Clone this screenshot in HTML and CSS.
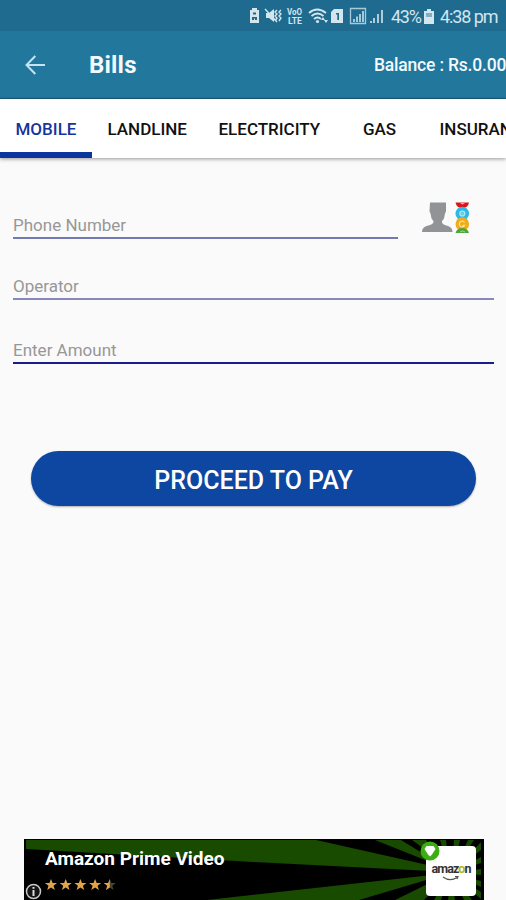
FILE: index.html
```html
<!DOCTYPE html>
<html lang="en">

<head>
    <meta charset="UTF-8">
    <meta name="viewport" content="width=device-width, initial-scale=1.0">
    <title>Bills</title>
    <link rel="stylesheet" href="styles.css">
</head>

<body>
    <!-- Status bar -->
    <div class="status-bar">
        <svg class="status-icons" width="140" height="20" viewBox="0 0 140 20" fill="#d3e5ed">
            <!-- battery saver -->
            <path fill-rule="evenodd" d="M3 2h5v2h2v13H1V4h2zM4 6.500v2h3v-2zM3 11v3h2v-1.500h1V14h2v-3z"/>
            <!-- muted -->
            <path d="M17 7h3l5-4v13l-5-4h-3z"/>
            <path d="M16 3l12 13M28 4l-2 2 2 2-2 2 2 2-2 3M32 4l-2 2 2 2-2 2 2 2-2 3" fill="none" stroke="#d3e5ed" stroke-width="1.400"/>
            <text class="volte" x="38" y="8.500" textLength="15" lengthAdjust="spacingAndGlyphs">VoO</text>
            <text class="volte" x="39" y="17.500" textLength="14" lengthAdjust="spacingAndGlyphs">LTE</text>
            <!-- wifi -->
            <path d="M60 7q8-7 17 0M62.500 10q6-5 12 0M65 13q3.500-3 7 0" fill="none" stroke="#d3e5ed" stroke-width="1.800"/>
            <circle cx="68.500" cy="15.500" r="1.600"/>
            <path d="M72 14l2-3 2 3zM75 14h4l-2 3z"/>
            <!-- sim -->
            <path fill-rule="evenodd" d="M85 3h9v14H82V6zM87 7v1.500h1.300V14H90V7z"/>
            <!-- signal -->
            <path d="M101.500 2.500h15v15h-15z" fill="none" stroke="#a7cadb" stroke-width="1.300"/>
            <path d="M104 13h2v3h-2zM107 10.500h2V16h-2zM110 8h2v8h-2zM113 5h2v11h-2z" opacity=".75"/>
            <path d="M121 15h2v2h-2zM124 12h2v5h-2zM128 8h2v9h-2zM132 4h2v13h-2z" opacity=".8"/>
        </svg>
        <span class="percent">43%</span>
        <svg class="battery" width="10" height="15" viewBox="0 0 10 15">
            <path d="M3 0h4v2h3v13H0V2h3z" fill="#d3e5ed"/>
            <path d="M2 4h6v4H2z" fill="#80adc2"/>
        </svg>
        <span class="time">4:38 pm</span>
    </div>

    <!-- Toolbar -->
    <header class="toolbar">
        <svg class="back" width="20" height="20" viewBox="0 0 20 20">
            <path d="M10.300 1L1.500 10l8.800 9M1.500 10H20" fill="none" stroke="#c3e4f0" stroke-width="2"/>
        </svg>
        <h1 class="title">Bills</h1>
        <span class="balance">Balance : Rs.0.00</span>
    </header>

    <nav class="tabs">
        <a class="tab active">MOBILE</a>
        <a class="tab landline">LANDLINE</a>
        <a class="tab electricity">ELECTRICITY</a>
        <a class="tab gas">GAS</a>
        <a class="tab insurance">INSURANCE</a>
    </nav>

    <!-- Bill form -->
    <main class="bill-form">
        <div class="phone-row">
            <div class="field phone">Phone Number</div>
            <svg class="contacts" width="58" height="38" viewBox="0 0 58 38">
                <path d="M11 2.500h16v9l-1 2-1 5q-2 2-2 4 .5 2 6 3.500 4.500 1.500 4.500 6H3q0-4.500 4.500-6 6-1.500 7-3.500 0-2-2-4l-1-5-1-2z" fill="#929396"/>
                <path d="M36.500 2.500h13.500q-1 5.500-6.700 5.500t-6.800-5.500z" fill="#d9141b"/>
                <circle cx="43.300" cy="13.500" r="6.800" fill="#2db8e5"/>
                <circle cx="43.300" cy="24" r="6.800" fill="#f1ab16"/>
                <path d="M36.500 33q1.500-5 6.800-5t6.700 5z" fill="#4da637"/>
                <path d="M41 3h5l-2.500 1.500z" fill="#f4b4b0"/>
                <circle cx="43.300" cy="13.500" r="2.500" fill="#67cceb" stroke="#b4e7f5" stroke-width="1.200"/>
                <path d="M45.500 22.500a2.800 2.800 0 1 0 0 3h-2" fill="none" stroke="#ffe0a0" stroke-width="1.300"/>
                <path d="M41 32q2.500-2 5 0" fill="none" stroke="#a6d39b"/>
            </svg>
        </div>
        <div class="field operator">Operator</div>
        <div class="field amount">Enter Amount</div>
        <button class="pay-button" type="button">PROCEED TO PAY</button>
    </main>

    <!-- Ad banner -->
    <aside class="ad">
        <svg class="rays" width="460" height="61" viewBox="0 0 460 61" fill="#184a00">
            <path d="M2 1H292L426 31 426 33 229 23 2 10z"/>
            <path d="M351 1h26l49 30z"/>
            <path d="M388 1h14l24 28z"/>
            <path d="M183 61L426 34l-91 27z"/>
            <path d="M371 61l55-27-26 27z"/>
            <path d="M416 1h6l4 33zM430 1h6l-8 33zM444 1h6l-22 33zM457 3v8l-29 23zM457 18v6l-29 10zM457 30v6l-29-2zM457 42v6l-29-14zM457 53v7l-29-26zM440 61h8l-20-27zM424 61h7l-4-27zM410 61h7l9-27z"/>
        </svg>
        <div class="ad-text">
            <div class="ad-title">Amazon Prime Video</div>
            <svg class="stars" width="74" height="12" viewBox="0 0 74 12" fill="#e0a548">
                <defs>
                    <path id="star" d="M6 0l1.600 4H12L8.500 6.800 9.800 11 6 8.500 2.200 11l1.300-4.200L0 4h4.400z"/>
                </defs>
                <use href="#star"/>
                <use href="#star" x="14.700"/>
                <use href="#star" x="29.400"/>
                <use href="#star" x="44.100"/>
                <use href="#star" x="58.800" fill="#49432f"/>
                <path d="M64.800 0v8.500L61 11l1.300-4.200L58.800 4h4.400z"/>
            </svg>
        </div>
        <svg class="info" width="17" height="17" viewBox="0 0 17 17">
            <circle cx="8.500" cy="8.500" r="7" fill="#151515" stroke="#c9c9c9" stroke-width="1.500"/>
            <path d="M7.500 4h2v1.800h-2zM7.500 7h2v6h-2z" fill="#ddd"/>
        </svg>
        <div class="ad-logo">
            <span class="brand">amaz<span class="brand-o">o</span>n</span>
            <svg class="smile" width="18" height="5" viewBox="0 0 18 5">
                <path d="M1 1q7 5 14 .5M13 .500l3 0-1 2.500" fill="none" stroke="#555" stroke-width="1.200"/>
            </svg>
            <svg class="badge" width="20" height="20" viewBox="0 0 20 20">
                <circle cx="10" cy="10" r="9.500" fill="#3bae13"/>
                <path d="M6.500 5h7L15.500 8 12 13.500 10 15.500 8 13.500 4.500 8z" fill="#fff"/>
            </svg>
        </div>
    </aside>
</body>

</html>
```
FILE: styles.css
```css
* {
    box-sizing: border-box;
}

body {
    font-family: Roboto, "Liberation Sans", sans-serif;
    margin: 0;
    height: 900px;
    background-color: #fafafa;
    color: #111;
    display: flex;
    flex-direction: column;
    overflow: hidden;
}

svg {
    display: block;
    flex: none;
}

.status-bar {
    height: 31px;
    flex: none;
    padding: 1px 0 0 249px;
    background: #1f6b90;
    color: #d3e5ed;
    display: flex;
    align-items: center;
    font-size: 18px;
    white-space: nowrap;
}

.volte {
    font-size: 8.5px;
    font-weight: bold;
}

.percent {
    margin-left: 2px;
    width: 33px;
    letter-spacing: -1.3px;
}

.time {
    margin-left: 6px;
    letter-spacing: -1.1px;
}

.toolbar {
    height: 68px;
    flex: none;
    padding-left: 25px;
    background: #22779d;
    border-bottom: 1px solid #1b5d7d;
    color: #f3fafd;
    display: flex;
    align-items: center;
    white-space: nowrap;
}

.title {
    margin: 1px 0 0 44px;
    width: 285px;
    flex: none;
    font-size: 24px;
    font-weight: 700;
    letter-spacing: 0.2px;
}

.balance {
    font-size: 17.5px;
    font-weight: 500;
    letter-spacing: -0.2px;
}

.tabs {
    height: 59px;
    flex: none;
    background: #fff;
    box-shadow: 0 1px 4px rgba(0, 0, 0, 0.4);
    display: flex;
}

.tab {
    width: 92px;
    flex: none;
    padding: 4px 0 0 15.5px;
    border-bottom: 6px solid transparent;
    font-size: 17px;
    font-weight: 500;
    line-height: 52px;
    height: 59px;
    white-space: nowrap;
}

.tab.active {
    color: #17349c;
    border-color: #0b359c;
}

.landline {
    width: 111px;
}

.electricity {
    width: 133px;
}

.gas {
    width: 88px;
    padding-left: 27px;
}

.insurance {
    width: 82px;
    overflow: hidden;
}

.bill-form {
    flex: 1;
    padding: 42px 12px 0 13px;
    display: flex;
    flex-direction: column;
}

.phone-row {
    display: flex;
    justify-content: space-between;
}

.field {
    height: 39px;
    padding-top: 14px;
    border-bottom: 2px solid #8888bd;
    color: #979797;
    font-size: 17px;
    line-height: 22px;
}

.phone {
    width: 385px;
    border-color: #7478b5;
}

.contacts {
    margin-right: 17px;
}

.operator {
    margin-top: 22px;
}

.amount {
    margin-top: 25px;
    border-color: #1c1c91;
}

.pay-button {
    margin: 87px 18px 0;
    height: 55px;
    border: none;
    border-radius: 28px;
    background-color: #0d47a1;
    box-shadow: 0 1px 2px rgba(0, 0, 0, 0.3);
    color: #fff;
    font-family: inherit;
    font-size: 25px;
    font-weight: 500;
    padding: 3px 0 0;
}

.ad {
    position: relative;
    height: 61px;
    width: 460px;
    flex: none;
    margin-left: 24px;
    padding: 7px 8px 0 21px;
    background: #000;
    display: flex;
    justify-content: space-between;
}

/* rays and info mark sit behind and over the ad content */
.rays {
    position: absolute;
    left: 0;
    top: 0;
}

.info {
    position: absolute;
    left: 1px;
    bottom: 0;
}

.ad-text,
.ad-logo {
    position: relative;
}

.ad-title {
    color: #fff;
    font-size: 19px;
    font-weight: 700;
    line-height: 25px;
    white-space: nowrap;
}

.stars {
    margin-top: 8px;
}

.ad-logo {
    width: 50px;
    height: 50px;
    border-radius: 4px;
    background: #fff;
    display: flex;
    flex-direction: column;
    align-items: center;
    padding-top: 16px;
}

.brand {
    color: #333;
    font-size: 12.5px;
    font-weight: 700;
    line-height: 14px;
    letter-spacing: -0.9px;
}

.brand-o {
    color: #a9b91c;
}

.badge {
    position: absolute;
    left: -6px;
    top: -5px;
}
```
